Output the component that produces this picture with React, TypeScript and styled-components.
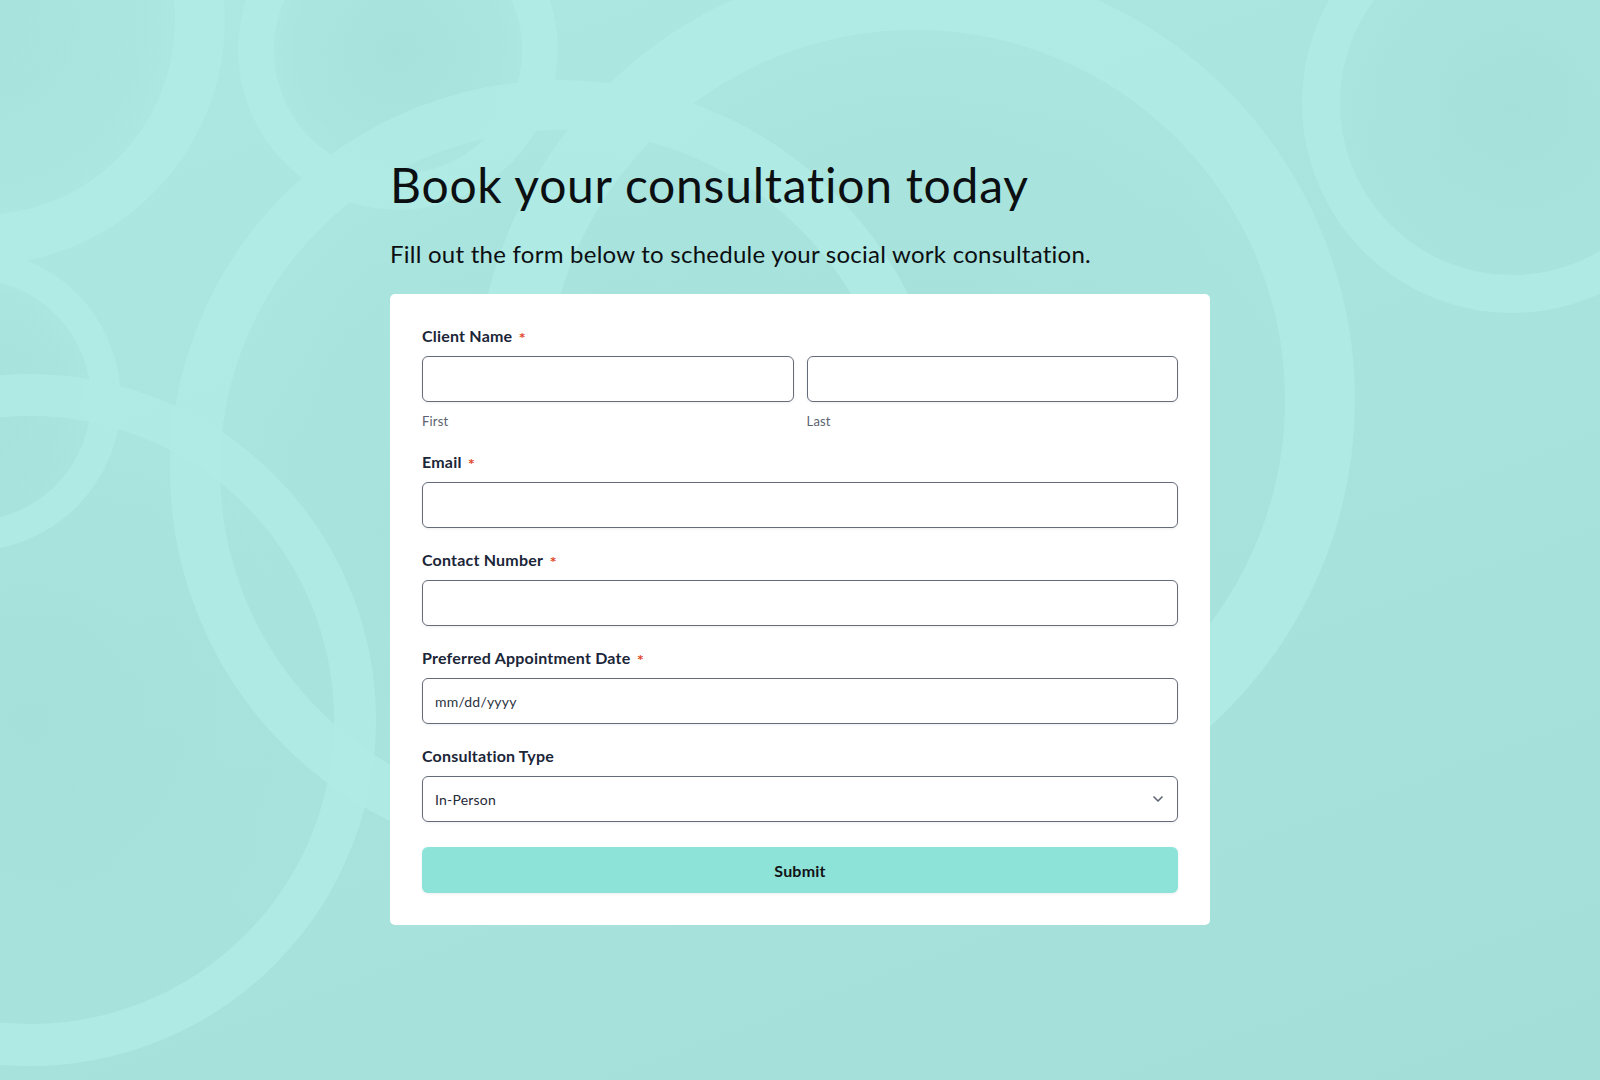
import styled, { createGlobalStyle } from 'styled-components';
import { ChevronDown } from 'lucide-react';

const GlobalStyle = createGlobalStyle`
  html, body {
    margin: 0;
    padding: 0;
  }
  body {
    background: #a8e3dd;
    font-family: 'Lato', 'Noto Sans', sans-serif;
    font-variant-ligatures: none;
  }
  * {
    box-sizing: border-box;
  }
`;

const Page = styled.div`
  position: relative;
  min-height: 1080px;
  width: 100%;
  overflow: hidden;
  background: linear-gradient(160deg, #ade8e2 0%, #a8e3dd 55%, #a3dfd8 100%);
`;

const Backdrop = styled.svg`
  position: absolute;
  inset: 0;
  width: 100%;
  height: 100%;
  z-index: 0;
`;

const Column = styled.main`
  position: relative;
  z-index: 1;
  width: 820px;
  margin: 0 auto;
  padding: 156px 0 120px;
`;

const Title = styled.h1`
  margin: 0 0 24px 0;
  font-size: 48px;
  line-height: 58px;
  font-weight: 400;
  letter-spacing: 0.75px;
  color: #0b0f12;
`;

const Subtitle = styled.p`
  margin: 0 0 24px 0;
  font-size: 24px;
  line-height: 32px;
  font-weight: 400;
  letter-spacing: 0.25px;
  color: #0b0f12;
`;

const Card = styled.form`
  background: #ffffff;
  border-radius: 5px;
  padding: 32px;
  display: flex;
  flex-direction: column;
  gap: 22px;
`;

const Field = styled.div`
  display: flex;
  flex-direction: column;
`;

const Label = styled.label`
  display: flex;
  align-items: center;
  gap: 7px;
  font-size: 16px;
  line-height: 22px;
  font-weight: 700;
  letter-spacing: 0.2px;
  color: #1b2638;
  margin-top: -1px;
  margin-bottom: 9px;
`;

const Required = styled.span`
  color: #e0461f;
  font-family: 'DejaVu Sans', sans-serif;
  font-size: 11px;
  font-weight: 700;
  line-height: 12px;
  transform: translateY(2px);
`;

const Pair = styled.div`
  display: grid;
  grid-template-columns: 1fr 1fr;
  column-gap: 13px;
`;

const Part = styled.div`
  display: flex;
  flex-direction: column;
`;

const SubLabel = styled.span`
  margin-top: 10px;
  font-size: 13px;
  line-height: 18px;
  letter-spacing: 0.2px;
  color: #5b6270;
`;

const Input = styled.input`
  width: 100%;
  height: 46px;
  padding: 0 12px;
  border: 1px solid #656c79;
  border-radius: 6px;
  background: #fff;
  box-shadow: 0 1px 3px rgba(30, 40, 60, 0.08);
  font-family: 'Lato', 'Noto Sans', sans-serif;
  font-size: 14px;
  letter-spacing: 0.2px;
  color: #1f2937;
  outline: none;
  &::placeholder {
    color: #2b3442;
    opacity: 1;
  }
`;

const SelectWrap = styled.div`
  position: relative;
`;

const Select = styled.select`
  width: 100%;
  height: 46px;
  padding: 0 36px 0 12px;
  border: 1px solid #656c79;
  border-radius: 6px;
  background: #fff;
  box-shadow: 0 1px 3px rgba(30, 40, 60, 0.08);
  font-family: 'Lato', 'Noto Sans', sans-serif;
  font-size: 14px;
  letter-spacing: 0.2px;
  color: #1f2937;
  appearance: none;
  outline: none;
`;

const Chevron = styled(ChevronDown)`
  position: absolute;
  right: 12px;
  top: 50%;
  transform: translateY(-50%);
  color: #5f6675;
  pointer-events: none;
`;

const Submit = styled.button`
  margin-top: 3px;
  height: 46px;
  border: none;
  border-radius: 6px;
  background: #8ee3d8;
  box-shadow: 0 1px 3px rgba(30, 40, 60, 0.08);
  font-family: 'Lato', 'Noto Sans', sans-serif;
  font-size: 16px;
  font-weight: 700;
  letter-spacing: 0.2px;
  color: #111417;
  cursor: pointer;
`;

const rings = [
  { cx: 915, cy: 400, r: 405, w: 70 },
  { cx: 1512, cy: 103, r: 191, w: 38 },
  { cx: 398, cy: 50, r: 142, w: 36 },
  { cx: -20, cy: 20, r: 220, w: 50 },
  { cx: -30, cy: 400, r: 136, w: 30 },
  { cx: 560, cy: 470, r: 365, w: 50 },
  { cx: 30, cy: 720, r: 325, w: 42 },
];

function Background() {
  return (
    <Backdrop viewBox="0 0 1600 1080" preserveAspectRatio="xMidYMid slice" aria-hidden>
      <defs>
        <radialGradient id="shade" cx="50%" cy="50%" r="50%">
          <stop offset="0%" stopColor="#a2ddd7" stopOpacity="0.55" />
          <stop offset="80%" stopColor="#a6e1db" stopOpacity="0.35" />
          <stop offset="100%" stopColor="#a6e1db" stopOpacity="0" />
        </radialGradient>
      </defs>
      {rings.map((g, i) => (
        <circle key={`s${i}`} cx={g.cx} cy={g.cy} r={g.r - g.w / 2} fill="url(#shade)" />
      ))}
      {rings.map((g, i) => (
        <circle
          key={`r${i}`}
          cx={g.cx}
          cy={g.cy}
          r={g.r}
          fill="none"
          stroke="#b0ebe5"
          strokeOpacity="0.85"
          strokeWidth={g.w}
        />
      ))}
    </Backdrop>
  );
}

export default function App() {
  return (
    <>
      <GlobalStyle />
      <Page>
        <Background />
        <Column>
          <Title>Book your consultation today</Title>
          <Subtitle>Fill out the form below to schedule your social work consultation.</Subtitle>
          <Card onSubmit={(e) => e.preventDefault()}>
            <Field>
              <Label>
                Client Name <Required>*</Required>
              </Label>
              <Pair>
                <Part>
                  <Input type="text" aria-label="First" />
                  <SubLabel>First</SubLabel>
                </Part>
                <Part>
                  <Input type="text" aria-label="Last" />
                  <SubLabel>Last</SubLabel>
                </Part>
              </Pair>
            </Field>
            <Field>
              <Label>
                Email <Required>*</Required>
              </Label>
              <Input type="email" />
            </Field>
            <Field>
              <Label>
                Contact Number <Required>*</Required>
              </Label>
              <Input type="tel" />
            </Field>
            <Field>
              <Label>
                Preferred Appointment Date <Required>*</Required>
              </Label>
              <Input type="text" placeholder="mm/dd/yyyy" />
            </Field>
            <Field>
              <Label>Consultation Type</Label>
              <SelectWrap>
                <Select defaultValue="In-Person">
                  <option>In-Person</option>
                  <option>Virtual</option>
                  <option>Phone</option>
                </Select>
                <Chevron size={16} strokeWidth={2.5} />
              </SelectWrap>
            </Field>
            <Submit type="submit">Submit</Submit>
          </Card>
        </Column>
      </Page>
    </>
  );
}
